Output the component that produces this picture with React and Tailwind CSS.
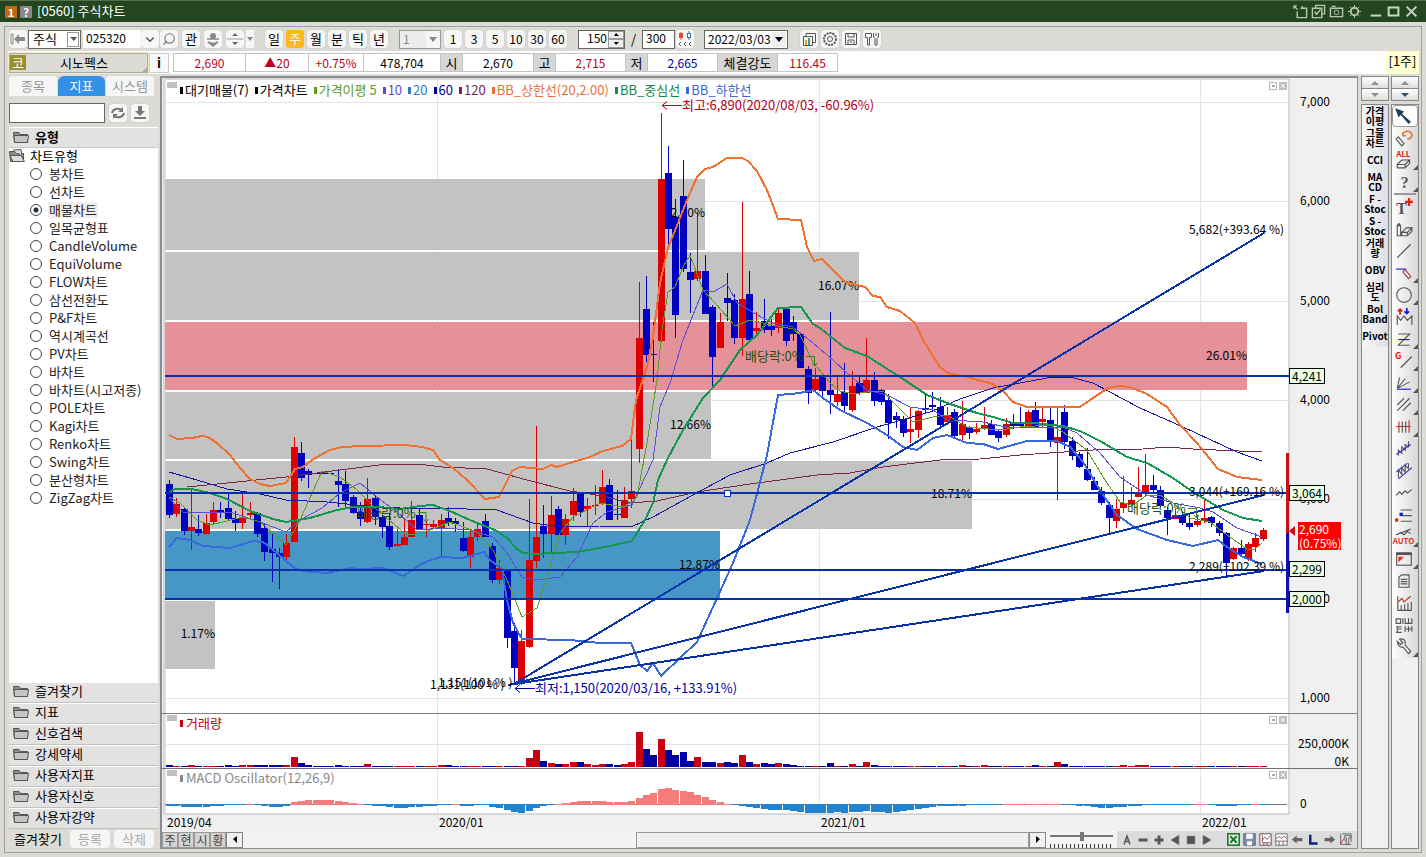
import React, { useState } from 'react';
import { Search } from 'lucide-react';

const chartTypes = [
    '봉차트', '선차트', '매물차트', '일목균형표', 'CandleVolume', 'EquiVolume', 'FLOW차트', '삼선전환도',
    'P&F차트', '역시계곡선', 'PV차트', '바차트', '바차트(시고저종)', 'POLE차트', 'Kagi차트', 'Renko차트',
    'Swing차트', '분산형차트', 'ZigZag차트',
];

const folders = ['즐겨찾기', '지표', '신호검색', '강세약세', '사용자지표', '사용자신호', '사용자강약'];

const quote = [
    { text: '2,690', cls: 'w-[72px] text-[#c00018]' },
    { text: '▲20', cls: 'w-[63px] text-[#c00018]' },
    { text: '+0.75%', cls: 'w-[55px] text-[#c00018]' },
    { text: '478,704', cls: 'w-[77px]' },
    { text: '시', head: true, cls: 'w-[22px]' },
    { text: '2,670', cls: 'w-[71px]' },
    { text: '고', head: true, cls: 'w-[22px]' },
    { text: '2,715', cls: 'w-[70px] text-[#c00018]' },
    { text: '저', head: true, cls: 'w-[22px]' },
    { text: '2,665', cls: 'w-[70px] text-[#000090]' },
    { text: '체결강도', head: true, cls: 'w-[60px]' },
    { text: '116.45', cls: 'w-[60px] text-[#c00018]' },
];

const legend = [
    { text: '대기매물(7)', cls: 'text-black' },
    { text: '가격차트', cls: 'text-black' },
    { text: '가격이평 5', cls: 'text-[#5f9a1c]' },
    { text: '10', cls: 'text-[#5a48d0]' },
    { text: '20', cls: 'text-[#2878c8]' },
    { text: '60', cls: 'text-[#0000a0]' },
    { text: '120', cls: 'text-[#782850]' },
    { text: 'BB_상한선(20,2.00)', cls: 'text-[#e8703a]' },
    { text: 'BB_중심선', cls: 'text-[#148848]' },
    { text: 'BB_하한선', cls: 'text-[#3868d8]' },
];

const sideIndicators = [
    ['가격', '이평'], ['그물', '차트'], ['CCI'], ['MA', 'CD'], ['F -', 'Stoc'], ['S -', 'Stoc'],
    ['거래', '량'], ['OBV'], ['심리', '도'], ['Bol', 'Band'], ['Pivot'],
];

// volume profile: top, bottom, right edge, fill, label, label baseline
const profile = [
    [179, 250, 705, '#c3c3c3', '12.50%', 217],
    [252, 320, 859, '#c3c3c3', '16.07%', 290],
    [322, 390, 1247, '#e59199', '26.01%', 360],
    [392, 459, 711, '#c3c3c3', '12.66%', 429],
    [461, 529, 972, '#c3c3c3', '18.71%', 498],
    [531, 599, 720, '#4696c6', '12.87%', 569],
    [601, 669, 215, '#c3c3c3', '1.17%', 638],
];

// weekly candles: rising, high, body top, body bottom, low
const candles = [
    [0, 480, 484, 515, 518], [1, 498, 504, 514, 517], [0, 507, 509, 531, 535], [1, 488, 527, 531, 550], [0, 515, 529, 533, 536],
    [1, 514, 523, 534, 534], [1, 502, 510, 522, 525], [0, 502, 510, 513, 518], [0, 493, 508, 519, 520], [0, 511, 518, 523, 531],
    [1, 493, 518, 523, 529], [1, 502, 513, 515, 520], [0, 512, 513, 534, 537], [0, 523, 528, 552, 561], [0, 534, 549, 553, 582],
    [0, 548, 553, 557, 589], [1, 534, 543, 557, 560], [1, 437, 447, 542, 542], [0, 442, 453, 478, 481], [0, 469, 471, 475, 488],
    [0, 473, 473, 474, 474], [0, 473, 473, 474, 474], [0, 473, 473, 474, 474], [0, 469, 481, 485, 507], [0, 471, 484, 501, 507],
    [0, 495, 497, 513, 514], [0, 502, 512, 519, 526], [1, 478, 499, 522, 523], [0, 495, 498, 517, 525], [0, 515, 517, 527, 538],
    [0, 513, 526, 547, 550], [1, 529, 544, 546, 546], [1, 519, 537, 545, 545], [1, 501, 520, 537, 537], [0, 508, 515, 529, 529],
    [1, 522, 524, 525, 537], [1, 520, 524, 527, 529], [1, 514, 520, 529, 557], [0, 507, 518, 523, 526], [0, 518, 521, 524, 532],
    [0, 522, 538, 551, 552], [1, 529, 537, 557, 568], [1, 523, 529, 537, 541], [0, 514, 521, 537, 537], [0, 543, 546, 580, 583],
    [1, 560, 568, 580, 584], [0, 570, 571, 638, 648], [0, 623, 631, 668, 683], [1, 630, 641, 682, 685], [1, 499, 560, 647, 648],
    [1, 426, 537, 561, 568], [0, 505, 526, 534, 558], [1, 496, 515, 534, 553], [0, 506, 509, 535, 535], [1, 514, 519, 535, 545],
    [1, 488, 501, 515, 521], [0, 493, 494, 512, 517], [1, 498, 506, 509, 527], [1, 485, 505, 506, 515], [1, 470, 487, 503, 505],
    [0, 479, 485, 520, 520], [0, 490, 514, 515, 520], [1, 487, 500, 518, 518], [1, 440, 491, 499, 508], [1, 282, 338, 449, 463],
    [0, 276, 309, 355, 362], [0, 322, 354, 355, 382], [1, 113, 179, 341, 342], [0, 146, 173, 229, 245], [0, 199, 217, 315, 338],
    [0, 160, 196, 269, 272], [0, 253, 272, 280, 313], [1, 212, 271, 279, 281], [0, 255, 271, 314, 314], [0, 305, 307, 357, 386],
    [1, 313, 322, 348, 348], [0, 273, 298, 303, 321], [0, 294, 300, 338, 344], [1, 202, 299, 338, 356], [0, 271, 294, 340, 342],
    [1, 312, 328, 331, 337], [0, 299, 321, 330, 333], [0, 319, 326, 330, 336], [1, 308, 313, 328, 333], [0, 308, 309, 341, 346],
    [0, 316, 322, 334, 341], [0, 333, 334, 368, 368], [0, 366, 369, 393, 404], [1, 368, 379, 390, 392], [0, 375, 377, 391, 397],
    [0, 312, 390, 395, 414], [1, 377, 394, 402, 406], [0, 363, 392, 406, 413], [1, 371, 386, 410, 412], [0, 377, 383, 393, 395],
    [1, 338, 380, 393, 393], [0, 372, 380, 401, 406], [0, 389, 390, 402, 405], [0, 394, 400, 423, 439], [0, 412, 416, 420, 428],
    [0, 416, 419, 433, 437], [1, 407, 429, 432, 443], [1, 410, 411, 430, 438], [0, 394, 408, 410, 413], [0, 392, 405, 407, 412],
    [0, 397, 407, 425, 427], [1, 407, 415, 422, 425], [0, 409, 412, 436, 439], [1, 401, 424, 435, 440], [0, 426, 427, 433, 439],
    [1, 423, 429, 432, 434], [1, 407, 425, 429, 430], [0, 420, 424, 435, 435], [0, 430, 431, 438, 442], [1, 418, 424, 435, 437],
    [0, 414, 423, 426, 429], [0, 407, 424, 426, 428], [1, 410, 412, 427, 427], [0, 402, 410, 427, 428], [1, 407, 419, 422, 428],
    [0, 407, 420, 440, 447], [1, 407, 437, 443, 500], [0, 405, 412, 442, 449], [0, 437, 441, 456, 460], [0, 452, 454, 467, 468],
    [0, 448, 469, 480, 481], [0, 477, 481, 490, 490], [0, 487, 491, 503, 505], [0, 502, 505, 518, 534], [1, 499, 509, 521, 528],
    [1, 476, 503, 508, 513], [1, 487, 500, 505, 506], [1, 467, 494, 497, 497], [1, 454, 485, 492, 495], [0, 475, 485, 490, 494],
    [0, 486, 490, 506, 507], [0, 507, 510, 518, 535], [1, 509, 515, 519, 519], [0, 513, 515, 523, 525], [0, 515, 523, 527, 530],
    [1, 515, 521, 525, 527], [1, 500, 518, 521, 523], [0, 516, 517, 523, 527], [0, 521, 523, 533, 536], [0, 532, 533, 563, 576],
    [1, 547, 548, 559, 560], [0, 540, 548, 554, 557], [1, 542, 544, 559, 561], [1, 533, 538, 547, 552], [1, 528, 530, 539, 541],
];

const candleX = (i) => Math.round(169 + i * 7.34);

const lines = {
    ma120: '187,487 227,483 286,477 340,470 387,464 417,464 443,467 487,469 527,480 570,491 603,496 630,503 657,501 697,492 750,484 817,475 850,473 883,467 940,460 980,459 1020,455 1093,450 1143,449 1167,447 1193,449 1262,452',
    ma60: '169,472 197,480 227,489 260,494 286,500 327,502 367,506 400,508 437,508 497,510 533,523 560,527 600,526 633,526 653,517 693,495 730,475 767,463 790,453 833,442 877,427 930,412 960,399 993,388 1047,378 1070,377 1093,383 1140,408 1183,427 1237,452 1262,461',
    ma10: '169,498 183,512 207,513 230,512 260,522 286,532 300,520 322,508 340,493 360,483 377,497 397,512 417,530 443,528 470,530 493,537 507,553 522,577 537,580 560,577 577,557 593,523 607,512 632,505 653,460 660,407 670,383 683,340 703,290 713,292 727,284 737,303 763,318 773,323 793,327 813,343 833,360 847,373 867,390 887,395 910,407 933,410 947,420 967,421 983,422 1010,428 1033,427 1063,427 1077,433 1100,453 1120,477 1147,495 1173,503 1200,508 1213,512 1237,528 1262,537',
    ma5: '169,497 180,503 197,520 210,525 227,521 243,517 260,522 273,533 286,545 300,520 322,471 340,477 357,490 377,510 407,535 423,533 450,522 477,532 493,550 507,580 522,617 537,608 547,577 560,533 573,517 600,503 623,507 632,502 637,497 647,443 657,380 662,330 668,292 675,287 683,267 690,255 703,290 715,303 735,326 750,320 767,324 793,329 800,335 813,362 830,383 840,391 853,394 867,392 883,391 893,402 913,422 933,417 947,415 967,427 1000,430 1020,427 1050,425 1063,432 1087,450 1103,477 1120,502 1133,505 1147,495 1160,495 1173,503 1190,518 1210,522 1227,535 1247,549 1255,549 1262,543',
    upper: '169,435 177,439 192,438 202,436 208,437 217,443 230,455 240,468 250,479 260,484 270,486 286,483 295,469 303,467 315,458 330,450 342,447 363,446 405,445 422,447 433,450 440,460 453,468 467,480 485,499 499,497 512,471 520,467 543,469 551,465 557,467 573,462 590,457 603,451 622,446 631,439 636,400 647,367 653,337 660,283 668,248 678,223 687,200 697,177 705,169 713,167 727,158 742,158 748,161 757,171 767,190 778,219 801,220 807,247 814,261 822,259 845,282 865,287 873,296 880,297 887,307 900,311 915,323 923,340 940,367 948,373 967,377 993,384 1003,391 1013,402 1027,407 1080,407 1093,398 1108,388 1120,386 1130,387 1147,394 1167,407 1180,425 1197,443 1218,469 1237,477 1262,480',
    middle: '169,492 175,489 192,489 210,493 227,499 250,511 273,519 286,522 310,518 337,510 353,507 377,507 400,509 420,506 433,505 450,511 470,520 497,531 507,538 517,549 523,553 533,554 577,552 610,546 632,541 640,528 645,520 653,503 658,480 668,458 683,430 703,398 720,380 740,350 757,335 778,308 801,307 813,324 820,328 845,348 867,356 900,377 927,395 950,404 977,413 993,417 1013,423 1033,423 1063,426 1080,431 1100,441 1127,457 1147,463 1173,478 1193,492 1223,510 1243,518 1262,521',
    lower: '169,547 177,538 190,540 203,546 230,548 253,541 263,542 277,553 293,567 303,571 327,573 350,568 360,569 383,568 403,576 423,563 440,557 462,558 470,556 484,552 490,560 502,569 507,600 513,623 522,639 570,640 600,643 631,643 640,665 647,671 653,663 661,676 680,658 697,642 713,607 733,563 750,520 758,490 767,455 778,395 790,394 800,393 813,390 823,398 840,410 867,423 887,435 903,447 917,450 933,438 947,435 967,443 983,444 998,449 1020,443 1027,441 1057,441 1070,447 1083,462 1103,495 1117,515 1137,529 1167,540 1193,546 1218,540 1227,547 1243,557 1262,564',
};

// weeks whose volume stands out from the flat base
const volumePeaks = {
    0: 2, 3: 2, 8: 2, 10: 2, 11: 2, 12: 2, 13: 2, 14: 2, 15: 2, 16: 2, 17: 10, 18: 4, 19: 2, 23: 2, 27: 3, 37: 2, 38: 2,
    49: 9, 50: 17, 51: 6, 52: 4, 53: 3, 54: 3, 55: 5, 56: 5, 57: 3, 58: 2, 59: 3, 60: 3, 61: 2, 62: 3, 63: 5, 64: 35, 65: 18,
    66: 12, 67: 28, 68: 17, 69: 12, 70: 15, 71: 6, 72: 10, 73: 5, 74: 5, 75: 4, 76: 5, 77: 4, 78: 12, 79: 5, 80: 3, 81: 4,
    82: 3, 83: 4, 84: 3, 85: 2, 90: 4, 93: 3, 95: 5, 96: 2, 108: 2, 111: 2, 118: 2, 121: 5, 122: 3, 130: 2, 132: 2, 133: 2,
};

const macd = [
    -2, -2, -3, -3, -3, -3, -2, -2, -1, -1, -1, 1, -1, -2, -3, -3, -2, 3, 4, 5, 5, 5, 5, 4, 3, 2, 1, -1, -2, -2,
    -3, -4, -4, -3, -3, -2, -2, -1, -1, 1, -2, -2, -1, -1, -3, -4, -6, -8, -9, -7, -4, -2, -1, 1, 2, 3, 4, 4, 4, 4,
    3, 3, 3, 4, 7, 10, 12, 16, 17, 15, 14, 13, 10, 8, 5, 3, 1, -1, -2, -3, -4, -5, -6, -6, -6, -7, -8, -9, -9, -9,
    -9, -8, -9, -8, -8, -7, -8, -8, -9, -8, -7, -6, -5, -4, -3, -2, -2, -2, -2, -1, -1, -1, -1, -1, 1, 1, 1, 1, 1, 1,
    1, 1, -1, -1, -2, -2, -3, -4, -4, -3, -3, -2, -2, -1, -1, -1, -1, -1, -1, -1, 1, 1, -1, -2, -2, -2, -1, -1, 1, -1,
];

const priceTicks = [[102, '7,000'], [201, '6,000'], [301, '5,000'], [400, '4,000'], [499, '3,000'], [599, '2,000'], [698, '1,000']];
const priceTags = [[376, '4,241'], [493, '3,064'], [569, '2,299'], [599, '2,000']];
const months = [[165, '2019/04'], [437, '2020/01'], [819, '2021/01'], [1200, '2022/01']];

const PriceChart = () => (
    <svg viewBox="162 78 1195 753" preserveAspectRatio="xMinYMin meet" className="block h-full w-full text-[12px]" role="img" aria-label="시노펙스 주봉 차트">
        <rect x="162" y="78" width="1195" height="753" fill="#f0f0f0" />
        <rect x="164" y="79" width="1125" height="735" fill="#fff" stroke="#b8b8b8" />

        {/* grid */}
        <g stroke="#e4e4e4" shapeRendering="crispEdges">
            {priceTicks.map(([y]) => <line key={y} x1="165" x2="1293" y1={y} y2={y} />)}
            {months.map(([x]) => <line key={x} x1={x} x2={x} y1="80" y2="818" />)}
            <line x1="165" x2="1293" y1="744" y2="744" />
        </g>

        {/* volume profile */}
        {profile.map(([top, bottom, right, fill, label, base]) => (
            <g key={label}>
                <rect x="165" y={top} width={right - 165} height={bottom - top} fill={fill} />
                <text x={right} y={base} textAnchor="end">{label}</text>
            </g>
        ))}

        {/* candles */}
        <g shapeRendering="crispEdges">
            {candles.map(([up, high, top, bottom, low], i) => (
                <g key={i} fill={up ? '#dc0000' : '#0000c0'}>
                    <rect x={candleX(i)} y={high} width="1" height={Math.max(low - high, 1)} />
                    <rect x={candleX(i) - 3} y={top} width="7" height={Math.max(bottom - top, 1)} />
                </g>
            ))}
        </g>

        <g fill="none" strokeLinejoin="round" shapeRendering="crispEdges">
            <polyline points={lines.ma120} stroke="#782850" />
            <polyline points={lines.ma60} stroke="#1414a0" />
            <polyline points={lines.ma10} stroke="#5a50d8" />
            <polyline points={lines.ma5} stroke="#5f9a1c" />
            <polyline points={lines.upper} stroke="#f07030" strokeWidth="2" />
            <polyline points={lines.middle} stroke="#149650" strokeWidth="2" />
            <polyline points={lines.lower} stroke="#3868dc" strokeWidth="2" />
        </g>

        {/* support lines and fan */}
        <g stroke="#0a32a8" strokeWidth="2" shapeRendering="crispEdges">
            <path d="M165 376H1289M165 493H1289M165 570H1289M165 599H1289" />
            <path d="M514 684L1264 233M508 685L1264 495M508 685L1264 571" />
        </g>
        <rect x="724.5" y="490.5" width="6" height="6" fill="#fff" stroke="#0a32a8" />
        <text x="1284" y="234" textAnchor="end">5,682(+393.64 %)</text>
        <text x="1284" y="496" textAnchor="end">3,044(+169.16 %)</text>
        <text x="1284" y="571" textAnchor="end">2,289(+102.39 %)</text>
        <text x="430" y="689">1,131(100 % )</text>
        <text x="438" y="687">1,151(101 % )</text>

        {/* ex-dividend marks */}
        <g fill="#1c5010" className="text-[13px]">
            <text x="745" y="361">배당락:0%</text>
            <text x="357" y="518">배당락:0%</text>
            <text x="1127" y="513">배당락:0%</text>
        </g>
        <g stroke="#2c8020" fill="none">
            <path d="M806 356.5H814.500V365M812 363L814.500 366L817 363" />
            <path d="M418 512.500H426V521M423.500 519L426 522L428.500 519" />
            <path d="M1188 508.500H1196.500V517M1194 515L1196.500 518L1199 515" />
        </g>

        <g fill="#b00018" className="text-[13px]">
            <path d="M662 105.500H682M667 101.500L662 105.500L667 109.500" fill="none" stroke="#b00018" />
            <text x="682" y="110">최고:6,890(2020/08/03, -60.96%)</text>
        </g>
        <g fill="#0000a0" className="text-[13px]">
            <path d="M515 688.500H535M520 684.500L515 688.500L520 692.500" fill="none" stroke="#0000a0" />
            <text x="535" y="693">최저:1,150(2020/03/16, +133.91%)</text>
        </g>

        {/* volume */}
        <g shapeRendering="crispEdges">
            {candles.map(([up], i) => {
                const h = volumePeaks[i] || 1;
                return <rect key={i} x={candleX(i) - 3} y={767 - h} width="7" height={h} fill={up ? '#c80010' : '#0000a0'} />;
            })}
            <rect x="162" y="713" width="1195" height="1" fill="#808080" />
            <rect x="162" y="768" width="1195" height="1" fill="#70707c" />
        </g>

        {/* macd oscillator */}
        <g shapeRendering="crispEdges">
            <rect x="165" y="804" width="1122" height="1" fill="#707070" />
            {macd.map((v, i) => (
                <rect key={i} x={candleX(i) - 3} y={v > 0 ? 805 - v : 804} width="7" height={Math.abs(v)} fill={v > 0 ? '#f47c7c' : '#2084d0'} />
            ))}
        </g>

        {/* axis labels */}
        {priceTicks.map(([y, label]) => <text key={label} x="1300" y={y + 4}>{label}</text>)}
        <text x="1349" y="748" textAnchor="end">250,000K</text>
        <text x="1349" y="766" textAnchor="end">0K</text>
        <text x="1300" y="808">0</text>
        {months.map(([x, label]) => <text key={label} x={x + 2} y="827">{label}</text>)}

        <rect x="1286" y="453" width="3" height="80" fill="#c81018" />
        <rect x="1286" y="533" width="3" height="80" fill="#1010b0" />
        {priceTags.map(([y, label]) => (
            <g key={label}>
                <rect x="1289.5" y={y - 7.5} width="35" height="15" fill="#e8ffe4" stroke="#000" />
                <text x="1292" y={y + 5}>{label}</text>
            </g>
        ))}
        <path d="M1289 531L1295 526V536Z" fill="#c81018" />
        <rect x="1298" y="522" width="43" height="28" fill="#f00" />
        <text x="1299" y="534" fill="#fff">2,690</text>
        <text x="1299" y="548" fill="#fff">(0.75%)</text>
    </svg>
);

const ToolButton = ({ children, label, active }) => (
    <button
        type="button"
        aria-label={label}
        className={`flex h-[18px] w-[18px] shrink-0 items-center justify-center rounded-[3px] leading-[18px] ${active ? 'bg-[#ffb81c] text-white' : 'bg-[#f6f6f6] shadow-[0_0_1px_#999]'}`}
    >
        {children}
    </button>
);

const Glyph = ({ children, size = 16, className = '' }) => (
    <svg width={size} height={size} viewBox="0 0 16 16" fill="none" stroke="#555" className={className} aria-hidden="true">
        {children}
    </svg>
);

const Folder = ({ open }) => (
    <svg width="16" height="14" viewBox="0 0 16 14" stroke="#555" aria-hidden="true">
        <path d="M.5 2.500H6L7.500 4.500H14.500V12.500H1.500Z" fill="#8c8c8c" />
        {open
            ? <path d="M4 1L12 0.500L13 6M1 6.500H12L15.500 12.500H4Z" fill="#ddd" />
            : <path d="M1 5.500H15.500L14.500 12.500H1.500Z" fill="#c4c4c4" />}
    </svg>
);

// drawing tools in the outer right column; corner marks a submenu
const drawTools = [
    { label: '선택', active: true, icon: <path d="M1 1L9 4L7 6L15 13L13 15L6 7L4 9Z" fill="#1c3c60" stroke="none" /> },
    { label: '되돌리기', icon: <><path d="M1 9L3 7L8 13L6 15Z" /><path d="M7 6A4 3.500 0 1 1 11 9M7 3V6H10" stroke="#e07830" strokeWidth="1.500" /></> },
    { label: '전체삭제', corner: true, icon: <><text x="1" y="5" fontSize="7" fontWeight="bold" fill="#e02010" stroke="none">ALL</text><path d="M2 12L6 8H13L9 12ZM2 12V15H9L13 11V8M9 12V15" /></> },
    { label: '도움말', corner: true, icon: <text x="5" y="13" fontSize="14" fontWeight="bold" fill="#555" stroke="none" className="font-['Liberation_Serif']">?</text> },
    { label: '문자', divider: true, icon: <><text x="1" y="14" fontSize="14" fontWeight="bold" fill="#555" stroke="none" className="font-['Liberation_Serif']">T</text><path d="M12.500 0V7M9 3.500H16" stroke="#e82010" strokeWidth="2" /></> },
    { label: '지우개', icon: <path d="M2 5V14H5V5ZM2 5L3.500 3L5 5M6 11L10 7H15L11 11ZM6 11V14H11L15 10V7M11 11V14" /> },
    { label: '직선', icon: <path d="M2 14L14 2" /> },
    { label: '펜', corner: true, icon: <><path d="M1 4.500H10" stroke="#1818d0" /><path d="M7 7L9 5L14 11L12 13Z" stroke="#a04040" /></> },
    { label: '원', corner: true, icon: <circle cx="8" cy="8" r="6.500" /> },
    { label: '파동', icon: <><path d="M2 15V7L5 11L8 7L11 11L15 7V15" /><path d="M4.500 6V1M2.500 3L4.500 1L6.500 3" stroke="#e02010" strokeWidth="1.500" /><path d="M10.500 0V5M8.500 3L10.500 5L12.500 3" stroke="#1818d0" strokeWidth="1.500" /></> },
    { label: '채널', corner: true, icon: <><path d="M3 3.500H13L3 13.500H13" /><path d="M3 8.500H13" stroke="#1818d0" /></> },
    { label: '갠', corner: true, icon: <><text x="0" y="6" fontSize="8" fontWeight="bold" fill="#e02010" stroke="none">G</text><path d="M5 14L15 4" /></> },
    { label: '부채꼴', corner: true, icon: <><path d="M2 13L4 3M2 13L9 4M2 13L13 7" /><path d="M2 13.500H14" stroke="#1818d0" /></> },
    { label: '평행선', corner: true, icon: <path d="M2 8L8 2M2 13L13 2M7 13L14 6" /> },
    { label: '주기선', corner: true, icon: <><path d="M1 7.500H14M3.500 3V13M12.500 2V13" stroke="#c03028" /><path d="M6.500 3V13M9.500 3V13" /></> },
    { label: '추세선', icon: <><path d="M3 14V9L6 12V6L9 9V4L12 6V1" /><path d="M1 13L14 4" stroke="#3030c0" /></> },
    { label: '추세대', icon: <><path d="M3 14V7L6 11V5L9 9V3L12 6V1" /><path d="M1 9L11 1M3 15L15 5" stroke="#3030c0" /></> },
    { label: '자유선', icon: <path d="M1 10L4 7L6 9L9 6L11 8L15 5" /> },
    { label: '수평선', icon: <><path d="M5 3.500H15M7 8.500H15M5 13.500H15" /><rect x="4" y="6" width="3" height="3" fill="#1818d0" stroke="none" /><rect x="0" y="11" width="3" height="3" fill="#d04010" stroke="none" /></> },
    { label: '자동추세', corner: true, icon: <><path d="M1 6L14 1M2 6L5 4L8 6L11 3L14 5" /><text x="-2" y="14" fontSize="7" fontWeight="bold" fill="#e03010" stroke="none">AUTO</text></> },
    { label: '창', corner: true, icon: <><rect x="1.500" y="2.500" width="13" height="11" /><path d="M1 3.500H15" strokeWidth="2" /><path d="M3 11V6H8Z" fill="#e03010" stroke="none" /></> },
    { label: '메모', icon: <path d="M3.500 4.500L6 2.500H12.500V13.500H3.500ZM5 6.500H11M5 8.500H11M5 10.500H11" /> },
    { label: '지표', icon: <><path d="M2.500 2V14M5.500 14V10M8.500 14V9M11.500 14V8M14.500 14V7M2 14.500H15" /><path d="M3 7L6 4L8 7L14 2" stroke="#c03028" /></> },
    { label: '배열', icon: <path d="M1 2.500H5V6.500H1ZM7 2V7M9 2V6.500H15V2M12 2V6M1 9.500H6M2 9V14M6 11.500H2M1 14.500H6M9 9V14M9 11.500H15M15 9V14M12 9V14" /> },
    { label: '설정', corner: true, icon: <path d="M2 3L5 6L7 4L4 1Q8 0 9 3V6L14 12L12 14L7 8Q3 9 2 3Z" /> },
];

const PaneButtons = ({ className }) => (
    <div className={`absolute right-[70px] flex gap-[2px] ${className}`}>
        <button type="button" aria-label="최대화" className="flex h-2 w-2 items-center justify-center border border-[#b8b8b8]">
            <span className="h-[2px] w-[3px] bg-[#aaa]" />
        </button>
        <button type="button" aria-label="닫기" className="h-2 w-2 bg-[#c0c0c0]">
            <svg viewBox="0 0 8 8" className="block h-2 w-2" stroke="#fff"><path d="M2 2L6 6M6 2L2 6" /></svg>
        </button>
    </div>
);

const Spinner = ({ dark }) => (
    <div className="h-[25px] shrink-0 border border-[#888] bg-[#f4f4f4]">
        <button type="button" aria-label="위로" className="flex h-[11px] w-full items-center justify-center bg-linear-to-b from-white to-[#ddd]">
            <svg width="8" height="4"><path d="M0 4L4 0L8 4Z" fill="#909090" /></svg>
        </button>
        <button type="button" aria-label="아래로" className="flex h-[12px] w-full items-center justify-center border-t border-[#888] bg-linear-to-b from-white to-[#ddd]">
            <svg width="8" height="4"><path d="M0 0L4 4L8 0Z" fill={dark ? '#384c78' : '#909090'} /></svg>
        </button>
    </div>
);

const TitleBar = () => (
    <header className="flex h-[22px] shrink-0 items-center border-t border-[#557050] bg-[#24461e] pr-2 pl-[5px] text-white">
        <span className="flex h-3 w-3 items-center justify-center bg-[#c06810] text-[11px] leading-3 font-bold">1</span>
        <button type="button" className="ml-[3px] flex h-3 w-3 items-center justify-center bg-[#888] text-[11px] leading-3 font-bold">?</button>
        <h1 className="ml-[5px] flex-1 pb-[2px]">[0560] 주식차트</h1>
        <div className="flex items-center gap-[3px]">
            <Glyph size={15}><path d="M1 2L5 6M1 2H4M1 2V5M8 4.500H14.500V14.500H4.500V8M10 2V4" stroke="#b8c8b0" strokeWidth="1.500" /></Glyph>
            <Glyph size={15}><path d="M5 4V1.500H14.500V10.500H12M1.500 4.500H11.500V14.500H1.500ZM4 8L6 11L10 6" stroke="#b8c8b0" strokeWidth="1.500" /></Glyph>
            <Glyph size={15}><path d="M1.500 4.500H14.500V13.500H1.500ZM3 2.500H7" stroke="#b8c8b0" strokeWidth="1.500" /><circle cx="8" cy="9" r="2.500" stroke="#b8c8b0" /></Glyph>
            <Glyph size={15}><circle cx="8" cy="8" r="4" stroke="#b8c8b0" strokeWidth="2" /><path d="M8 1V4M8 12V15M1 8H4M12 8H15M3 3L5 5M11 11L13 13M3 13L5 11M11 5L13 3" stroke="#b8c8b0" /></Glyph>
        </div>
        <div className="ml-[7px] flex items-center gap-[5px]">
            <button type="button" aria-label="최소화"><Glyph size={13}><path d="M2 13H15" stroke="#c8d4c4" strokeWidth="2.500" /></Glyph></button>
            <button type="button" aria-label="최대화"><Glyph size={13}><path d="M2 3H14V13H2Z" stroke="#c8d4c4" strokeWidth="2.500" /></Glyph></button>
            <button type="button" aria-label="닫기"><Glyph size={13}><path d="M2 2L14 14M14 2L2 14" stroke="#c8d4c4" strokeWidth="2.500" /></Glyph></button>
        </div>
    </header>
);

const Toolbar = () => (
    <div className="flex h-6 shrink-0 items-center pl-1">
        <ToolButton label="처음"><Glyph><path d="M1 3H3V13H1Z" stroke="#888" /><path d="M4 8L9 3V6H15V10H9V13Z" fill="#888" stroke="none" /></Glyph></ToolButton>
        <div className="relative ml-px">
            <select aria-label="구분" className="h-[19px] w-[53px] appearance-none border border-[#666] bg-white pl-1 leading-4">
                <option>주식</option>
            </select>
            <span className="pointer-events-none absolute top-[2px] right-[2px] flex h-[15px] w-3 items-center justify-center border border-[#999]">
                <svg width="7" height="4"><path d="M0 0L4 4L7 0Z" fill="#555" /></svg>
            </span>
        </div>
        <input aria-label="종목코드" defaultValue="025320" className="ml-[2px] h-[18px] w-[58px] bg-white pb-[3px] pl-[3px] text-xs" />
        <ToolButton label="종목목록"><Glyph size={12}><path d="M3 6L8 11L13 6" strokeWidth="2" /></Glyph></ToolButton>
        <div className="ml-px flex gap-[4px]">
            <ToolButton label="검색"><Search size={14} color="#777" className="-scale-x-100" /></ToolButton>
            <ToolButton>관</ToolButton>
            <ToolButton label="관리자"><Glyph><circle cx="8" cy="5" r="3" fill="#888" stroke="none" /><path d="M2 8H14M3 11Q8 14 13 11L8 15Z" fill="#888" stroke="#888" strokeWidth="1.500" /></Glyph></ToolButton>
            <ToolButton label="이전 다음"><Glyph><path d="M5 5L8 2L11 5ZM5 11L8 14L11 11Z" fill="#666" stroke="none" /><path d="M0 8H16" stroke="#999" /></Glyph></ToolButton>
        </div>
        <button type="button" aria-label="더보기" className="ml-[2px] flex h-[18px] w-[8px] items-center justify-center bg-[#f6f6f6]">
            <svg width="6" height="4"><path d="M0 0L3 4L6 0Z" fill="#888" /></svg>
        </button>
        <div className="ml-[11px] flex gap-[3px]">
            {['일', '주', '월', '분', '틱', '년'].map((p) => <ToolButton key={p} active={p === '주'}>{p}</ToolButton>)}
        </div>
        <div className="relative ml-[11px]">
            <select aria-label="주기" className="h-[19px] w-[42px] appearance-none border border-[#999] bg-[#ececec] pl-[3px] text-xs text-[#888]">
                <option>1</option>
            </select>
            <span className="pointer-events-none absolute top-px right-px flex h-[17px] w-[14px] items-center justify-center bg-[#f6f6f6]">
                <svg width="8" height="5"><path d="M0 0L4 5L8 0Z" fill="#888" /></svg>
            </span>
        </div>
        <div className="ml-[3px] flex gap-[3px] text-xs">
            {['1', '3', '5', '10', '30', '60'].map((p) => <ToolButton key={p}>{p}</ToolButton>)}
        </div>
        <div className="ml-[11px] flex h-[19px] w-[47px] border border-[#666] bg-white">
            <input aria-label="표시 봉수" defaultValue="150" className="w-[28px] pb-[3px] text-right text-xs" />
            <div className="ml-px flex w-4 flex-col">
                <button type="button" aria-label="증가" className="flex flex-1 items-center justify-center border border-[#999] bg-[#eee]"><svg width="5" height="3"><path d="M0 3L2 0L5 3Z" /></svg></button>
                <button type="button" aria-label="감소" className="flex flex-1 items-center justify-center border border-[#999] bg-[#eee]"><svg width="5" height="3"><path d="M0 0L2 3L5 0Z" /></svg></button>
            </div>
        </div>
        <span className="w-[17px] text-center">/</span>
        <input aria-label="전체 봉수" defaultValue="300" className="h-[19px] w-[33px] border border-[#666] bg-white pb-[3px] pl-[3px] text-xs" />
        <div className="ml-px">
            <ToolButton label="봉 이동"><Glyph><path d="M4 1V9" stroke="#e05030" /><rect x="2" y="2" width="4" height="5" fill="#e05030" stroke="none" /><path d="M12 0V9" stroke="#3070c0" /><rect x="10.500" y="2.500" width="3" height="4" fill="#fff" stroke="#3070c0" /><path d="M4 11L2 13L4 15M9 11L7 13L9 15M14 11L12 13L14 15" /></Glyph></ToolButton>
        </div>
        <div className="relative ml-[10px]">
            <select aria-label="일자" className="h-[19px] w-[84px] appearance-none border border-[#666] bg-white pl-[3px] text-xs">
                <option>2022/03/03</option>
            </select>
            <span className="pointer-events-none absolute top-[2px] right-[2px] flex h-[15px] w-[14px] items-center justify-center bg-[#eee]">
                <svg width="8" height="5"><path d="M0 0L4 5L8 0Z" /></svg>
            </span>
        </div>
        <div className="ml-3 flex gap-[3px]">
            <ToolButton label="차트 복사"><Glyph><path d="M5 5V2.500H14.500V11.500H12M2.500 5.500H11.500V14.500H2.500Z" /><path d="M5 14V9" stroke="#e8a020" strokeWidth="2" /><path d="M8 14V7" stroke="#30a0a0" strokeWidth="2" /></Glyph></ToolButton>
            <ToolButton label="환경설정"><Glyph><circle cx="8" cy="8" r="6" strokeDasharray="2 1" strokeWidth="2" /><circle cx="8" cy="8" r="2.500" /></Glyph></ToolButton>
            <ToolButton label="저장"><Glyph><path d="M2.500 2.500H13.500V13.500H2.500ZM5 2V6H11V2M5 14V9H11V14M7 11H9" /></Glyph></ToolButton>
            <ToolButton label="도구"><Glyph><path d="M1.500 2.500H7.500V6.500H5.500V14H3.500V6.500H1.500ZM9.500 2V6L11 7.500V14H13V7.500L14.500 6V2M12 2V5" /></Glyph></ToolButton>
        </div>
    </div>
);

const QuoteRow = () => (
    <div className="mr-[2px] ml-[3px] flex h-[23px] shrink-0 items-center bg-white">
        <button type="button" className="ml-px flex h-5 w-[139px] items-center border border-[#aaa] bg-[#dcdbd6] outline outline-[#f0ecc0]">
            <span className="h-[15px] w-4 bg-[#98902c] text-center leading-[15px] text-white">코</span>
            <span className="flex-1 text-center">시노펙스</span>
            <svg width="5" height="5" className="self-end"><path d="M5 0V5H0Z" fill="#aaa" /></svg>
        </button>
        <button type="button" aria-label="종목정보" className="ml-px h-5 w-5 border border-[#ccc] bg-[#f8f8f8] font-bold">i</button>
        <table className="ml-1 table-fixed border-collapse text-center text-xs leading-4">
            <tbody>
                <tr className="h-[18px]">
                    {quote.map(({ text, head, cls }) => head
                        ? <th key={text} scope="row" className={`border border-[#c4c4c4] bg-[#d6d6d6] p-0 text-[13px] font-normal ${cls}`}>{text}</th>
                        : <td key={text} className={`border border-[#c4c4c4] p-0 ${cls}`}>{text}</td>)}
                </tr>
            </tbody>
        </table>
        <span className="ml-auto h-full w-[33px] bg-[#ffffd0] text-center leading-5">[1주]</span>
    </div>
);

const Sidebar = () => {
    const [type, setType] = useState('매물차트');

    return (
        <aside className="flex w-[149px] shrink-0 flex-col">
            <div className="flex h-5 shrink-0 gap-px text-[#999]">
                <button type="button" className="w-12 rounded-t bg-[#f6f6f6]">종목</button>
                <button type="button" className="w-[47px] rounded-t-md bg-[#3490e4] text-white">지표</button>
                <button type="button" className="w-12 rounded-t bg-[#f6f6f6]">시스템</button>
            </div>
            <div className="mt-[7px] flex h-5 shrink-0 items-center gap-1">
                <input aria-label="지표 검색" className="h-5 w-24 border border-[#666] bg-white px-1" />
                <ToolButton label="새로고침"><Glyph><path d="M2 8A6 5 0 0 1 12 5M14 8A6 5 0 0 1 4 11" stroke="#777" strokeWidth="2" /><path d="M13 2V7H8ZM3 14V9H8Z" fill="#777" stroke="none" /></Glyph></ToolButton>
                <ToolButton label="내려받기"><Glyph><path d="M6 1H10V6H13L8 11L3 6H6ZM2 12H14V14H2Z" fill="#777" stroke="none" /></Glyph></ToolButton>
            </div>
            <h2 className="mt-1 flex h-[21px] shrink-0 items-center gap-[6px] border-y border-t-white border-b-[#c8c8c8] bg-[#e2e2e0] pb-[2px] pl-1 font-bold">
                <Folder />유형
            </h2>
            <div className="min-h-0 flex-1 overflow-hidden bg-white">
                <p className="flex h-[17px] items-center gap-[5px] pb-[2px]"><Folder open />차트유형</p>
                <ul>
                    {chartTypes.map((name) => (
                        <li key={name} className="h-[18px]">
                            <label className="flex h-[18px] items-center pl-[21px]">
                                <input
                                    type="radio"
                                    name="chartType"
                                    checked={type === name}
                                    onChange={() => setType(name)}
                                    className="h-3 w-3 appearance-none rounded-full border border-[#444] bg-white checked:bg-[radial-gradient(circle,#203040_2px,white_3px)]"
                                />
                                <span className={`ml-[6px] px-px leading-4 text-[#222] ${type === name ? 'bg-[#efefef]' : ''}`}>{name}</span>
                            </label>
                        </li>
                    ))}
                </ul>
            </div>
            <nav className="shrink-0">
                {folders.map((name) => (
                    <button key={name} type="button" className="flex h-[21px] w-full items-center gap-[6px] border-y border-t-white border-b-[#c0c0c0] bg-[#e2e2e0] pb-[3px] pl-1">
                        <Folder />{name}
                    </button>
                ))}
            </nav>
            <div className="flex h-5 shrink-0 items-center gap-1 pl-[5px]">
                <span className="w-[52px]">즐겨찾기</span>
                <button type="button" className="h-[18px] w-10 rounded bg-[#f6f6f6] text-[#aaa]">등록</button>
                <button type="button" className="h-[18px] w-10 rounded bg-[#f6f6f6] text-[#aaa]">삭제</button>
            </div>
        </aside>
    );
};

const BottomBar = () => (
    <div className="flex h-[17px] shrink-0 items-center bg-[#f4f4f4]">
        {['주', '현', '시', '황'].map((t) => (
            <button key={t} type="button" className="h-4 w-4 border border-[#999] bg-[#d4d4d4] text-[12px] leading-[14px] text-[#444]">{t}</button>
        ))}
        <button type="button" aria-label="왼쪽으로" className="flex h-4 w-[17px] items-center justify-center border border-[#888] bg-[#f0f0f0]"><svg width="4" height="7"><path d="M4 0L0 3L4 7Z" /></svg></button>
        <div className="flex h-4 flex-1 justify-end">
            <div className="h-4 w-1/2 border border-[#999] bg-[#f0f0f0]" />
        </div>
        <button type="button" aria-label="오른쪽으로" className="flex h-4 w-[17px] items-center justify-center border border-[#888] bg-[#f0f0f0]"><svg width="4" height="7"><path d="M0 0L4 3L0 7Z" /></svg></button>
        <div className="mx-1 flex h-4 w-[63px] flex-col justify-between">
            <input type="range" aria-label="확대" defaultValue="50" className="h-[9px] w-full appearance-none bg-[linear-gradient(#777,#777)] bg-[length:100%_2px] bg-center bg-no-repeat [&::-webkit-slider-thumb]:h-[9px] [&::-webkit-slider-thumb]:w-[4px] [&::-webkit-slider-thumb]:appearance-none [&::-webkit-slider-thumb]:bg-[#777]" />
            <div className="h-[4px] bg-[repeating-linear-gradient(90deg,#333_0_1px,transparent_1px_4px)]" />
        </div>
        <div className="flex h-full w-[240px] items-center justify-between bg-[#dcdcdc] pr-1 pl-[2px]">
            <div className="flex">
                {[
                    ['자동', <path d="M4 14L8 3L12 14M5.500 10H10.500" strokeWidth="2" />],
                    ['축소', <path d="M2 8H14" strokeWidth="4" />],
                    ['확대', <path d="M8 2V14M2 8H14" strokeWidth="4" />],
                    ['이전', <path d="M13 2V14L3 8Z" fill="#555" />],
                    ['정지', <path d="M3 3H13V13H3Z" fill="#555" />],
                    ['다음', <path d="M3 2V14L13 8Z" fill="#555" />],
                ].map(([label, icon]) => <button key={label} type="button" aria-label={label} className="flex w-4 justify-center"><Glyph size={12}>{icon}</Glyph></button>)}
            </div>
            <div className="flex">
                {[
                    ['엑셀', <><rect x="1" y="1" width="14" height="14" fill="#e8f4e4" stroke="#207830" strokeWidth="2" /><path d="M4 4L12 12M12 4L4 12" stroke="#207830" strokeWidth="2.500" /></>],
                    ['저장', <><path d="M1 1H15V15H1Z" fill="#8090a8" stroke="#405070" /><path d="M4 1H12V7H4ZM5 10H11V15H5Z" fill="#fff" stroke="none" /></>],
                    ['차트', <><path d="M1 1H15V15H1Z" fill="#fff" stroke="#503838" /><path d="M4 2V12H14M4 9L7 5L10 8L14 3M6 15V12M10 15V12" stroke="#803838" /></>],
                    ['분할', <><path d="M1 1H15V15H1ZM1 10H15M5 10V15M10 10V15" fill="#fff" /><path d="M2 7L5 4L8 7L11 4L14 6" stroke="#b02020" /></>],
                    ['왼쪽', <path d="M1 8L7 3V6H14V10H7V13Z" fill="#666" stroke="none" />],
                    ['로그', <path d="M4 2V13H13" stroke="#102080" strokeWidth="3" />],
                    ['오른쪽', <path d="M15 8L9 3V6H2V10H9V13Z" fill="#666" stroke="none" />],
                    ['차트설정', <><path d="M2 1V14H15M7 3H14V6H12V14H9V6H7ZM4 1H15V11" /><path d="M2 13L6 7L8 10" stroke="#c02020" /></>],
                ].map(([label, icon]) => <button key={label} type="button" aria-label={label} className="flex w-4 justify-center"><Glyph size={13}>{icon}</Glyph></button>)}
            </div>
        </div>
    </div>
);

const App = () => (
    <div className="flex h-screen flex-col overflow-hidden bg-[#dcdbd6] font-['Noto_Sans_CJK_KR',sans-serif] text-[13px] leading-4 text-black">
        <TitleBar />
        <div className="m-1 flex min-h-0 flex-1 flex-col border border-[#a0a0a0]">
            <Toolbar />
            <QuoteRow />
            <main className="mt-[2px] mb-[3px] flex min-h-0 flex-1 pr-[2px] pl-1">
                <Sidebar />
                <section className="ml-[2px] flex min-w-0 flex-1 flex-col border border-t-2 border-l-2 border-[#888c94]">
                    <div className="relative min-h-0 flex-1">
                        <PriceChart />
                        <div className="absolute top-1 left-[5px] flex items-start">
                            <span className="h-[6px] w-[10px] bg-[#c0c0c0]" />
                            <ul className="ml-[3px] flex gap-[6px]">
                                {legend.map(({ text, cls }) => (
                                    <li key={text} className={`flex items-center gap-[2px] whitespace-nowrap ${cls}`}>
                                        <span className="h-[7px] w-[3px] bg-current" />{text}
                                    </li>
                                ))}
                            </ul>
                        </div>
                        <div className="absolute top-[637px] left-[5px] flex items-start text-[#c00010]">
                            <span className="h-[6px] w-[10px] bg-[#c0c0c0]" />
                            <span className="ml-[3px] flex items-center gap-[3px]"><span className="h-[7px] w-[3px] bg-current" />거래량</span>
                        </div>
                        <div className="absolute top-[692px] left-[5px] flex items-start text-[#888]">
                            <span className="h-[6px] w-[10px] bg-[#c0c0c0]" />
                            <span className="ml-[3px] flex items-center gap-[3px]"><span className="h-[7px] w-[3px] bg-current" />MACD Oscillator(12,26,9)</span>
                        </div>
                        <PaneButtons className="top-1" />
                        <PaneButtons className="top-[638px]" />
                        <PaneButtons className="top-[693px]" />
                    </div>
                    <BottomBar />
                </section>
                <div className="ml-[3px] flex w-7 shrink-0 flex-col gap-[3px]">
                    <Spinner />
                    <div className="flex-1 border border-[#888] bg-[#f0f0f0]">
                        {sideIndicators.map((words) => (
                            <button key={words.join('')} type="button" className="flex h-[22px] w-full flex-col items-center justify-center bg-linear-to-r from-[#f8f8f8] to-[#dcdfe6] text-[10px] leading-[10px] font-bold">
                                {words.map((w) => <span key={w} className="whitespace-nowrap">{w}</span>)}
                            </button>
                        ))}
                    </div>
                </div>
                <div className="ml-[2px] flex w-7 shrink-0 flex-col gap-[3px]">
                    <Spinner dark />
                    <div className="flex-1 border border-[#888] bg-[#f0f0f0]">
                        {drawTools.map(({ label, icon, corner, divider, active }) => (
                            <div key={label} className="bg-linear-to-r from-white to-[#d8d8d8]">
                                {divider && <div className="mx-[2px] mb-px h-[2px] bg-[#999]" />}
                                <button
                                    type="button"
                                    aria-label={label}
                                    className={`flex h-[22px] w-full items-end justify-end ${active ? 'rounded border border-[#999] bg-white' : ''}`}
                                >
                                    <Glyph size={18} className="shrink-0 self-center overflow-visible">{icon}</Glyph>
                                    <svg width="5" height="5" className="mb-px shrink-0"><path d="M5 0V5H0Z" fill={corner ? '#555' : 'none'} /></svg>
                                </button>
                            </div>
                        ))}
                    </div>
                </div>
            </main>
        </div>
    </div>
);

export default App;
